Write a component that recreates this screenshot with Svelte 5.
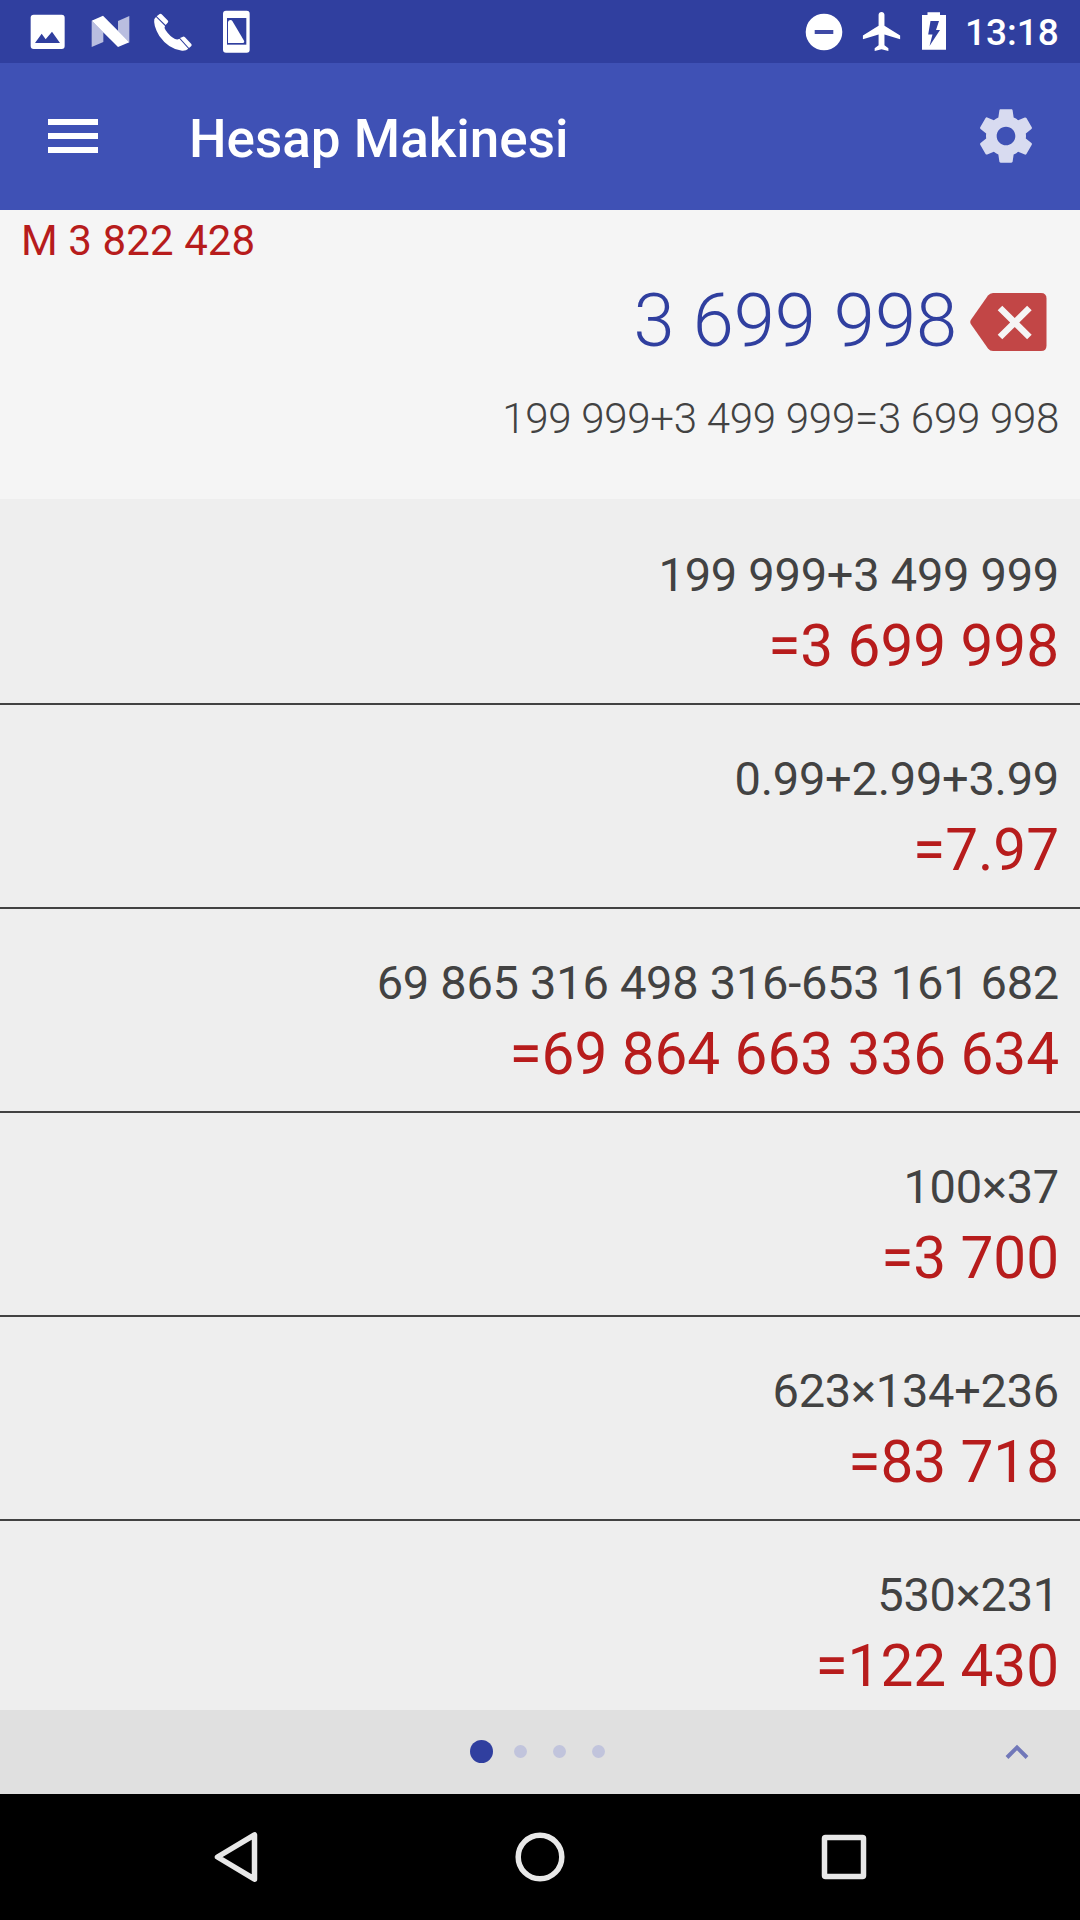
<script>
	let memory = $state('M 3 822 428');
	let current = $state('3 699 998');
	let expression = $state('199 999+3 499 999=3 699 998');
	let page = $state(0);

	const history = [
		{ expr: '199 999+3 499 999', result: '3 699 998' },
		{ expr: '0.99+2.99+3.99', result: '7.97' },
		{ expr: '69 865 316 498 316-653 161 682', result: '69 864 663 336 634' },
		{ expr: '100×37', result: '3 700' },
		{ expr: '623×134+236', result: '83 718' },
		{ expr: '530×231', result: '122 430' }
	];
</script>

<div class="screen">
	<div class="status">
		<div class="notifications">
			<!-- picture -->
			<svg viewBox="0 0 189 189">
				<rect x="44" y="44" width="102" height="103" rx="9" fill="#fff" />
				<path d="M57 129L77 101L89 118L108 95L132 129Z" fill="#303f9f" />
			</svg>
			<!-- android n -->
			<svg viewBox="0 0 189 189">
				<path d="M38 62L73 97V126L38 141Z" fill="#b9bee0" />
				<path d="M117 63L151 48V127L117 94Z" fill="#b9bee0" />
				<path d="M38 62L72 47L151 127L117 141Z" fill="#fff" />
			</svg>
			<!-- phone -->
			<svg viewBox="0 0 189 189" fill="#fff">
				<path d="M42 51L69 78Q65 84 71 91Q84 110 99 117Q107 120 112 116L139 146Q132 153 120 152Q80 148 52 108Q33 76 37 57Z" />
				<path d="M44 49L53 42Q56 40 59 43L78 62Q80 65 77 68L71 75Z" />
				<path d="M114 114L123 110Q126 109 129 112L148 132Q150 135 148 138L141 144Z" />
			</svg>
			<!-- device -->
			<svg viewBox="0 0 189 189">
				<rect x="54" y="32" width="80" height="126" rx="9" fill="#fff" />
				<rect x="66" y="54" width="58" height="80" fill="#303f9f" />
				<path d="M69 66Q70 60 77 60Q80 60 82 63L118 124Q118 129 114 129H69Z" fill="#fff" />
				<path d="M120 58V130" stroke="#303f9f" stroke-width="4" />
			</svg>
		</div>
		<div class="system">
			<svg class="dnd" viewBox="0 0 52 63">
				<circle cx="26" cy="32" r="18.3" fill="#fff" />
				<rect x="16.7" y="30" width="18.6" height="4" fill="#3f4aa6" />
			</svg>
			<svg class="plane" viewBox="0 0 24 24">
				<path
					d="M21 16v-2l-8-5V3.500c0-.83-.67-1.500-1.500-1.500S10 2.670 10 3.500V9l-8 5v2l8-2.500V19l-2 1.500V22l3.500-1 3.500 1v-1.500L13 19v-5.500l8 2.500z"
					fill="#fff"
				/>
			</svg>
			<svg class="battery" viewBox="0 0 40 63">
				<path d="M8 15H13.500V12.300H26V15H32V49.700H8Z" fill="#fff" />
				<path d="M16.500 21H25L22 30H26L15.500 46L18.500 34.500H14.200Z" fill="#303f9f" />
			</svg>
			<span class="time">13:18</span>
		</div>
	</div>

	<header>
		<button class="menu" aria-label="Menu">
			<i></i>
			<i></i>
			<i></i>
		</button>
		<h1>Hesap Makinesi</h1>
		<svg class="gear" viewBox="0 0 24 24">
			<path
				d="M19.430 12.980c.04-.32.07-.64.07-.98s-.03-.66-.07-.98l2.110-1.650c.19-.15.24-.42.12-.64l-2-3.460c-.12-.22-.39-.3-.61-.22l-2.490 1c-.52-.4-1.080-.73-1.690-.98l-.38-2.650C14.460 2.180 14.250 2 14 2h-4c-.25 0-.46.18-.49.42l-.38 2.650c-.61.25-1.170.59-1.690.98l-2.490-1c-.23-.09-.49 0-.61.22l-2 3.460c-.13.22-.07.49.12.64l2.110 1.650c-.04.32-.07.65-.07.98s.03.66.07.98l-2.110 1.650c-.19.15-.24.42-.12.64l2 3.460c.12.22.39.3.61.22l2.490-1c.52.4 1.080.73 1.690.98l.38 2.650c.03.24.24.42.49.42h4c.25 0 .46-.18.49-.42l.38-2.650c.61-.25 1.170-.59 1.690-.98l2.490 1c.23.09.49 0 .61-.22l2-3.460c.12-.22.07-.49-.12-.64l-2.110-1.650zM12 15.500c-1.930 0-3.500-1.570-3.500-3.500s1.570-3.500 3.500-3.500 3.500 1.570 3.500 3.500-1.570 3.500-3.500 3.500z"
			/>
		</svg>
	</header>

	<div class="display">
		<div class="memory">{memory}</div>
		<div class="current">
			<span>{current}</span>
			<svg viewBox="0 0 77 58">
				<path
					d="M23 0H71Q76.500 0 76.500 5.500V52.500Q76.500 58 71 58H23Q20 58 18 55.500L.8 31Q-.3 29 .8 27L18 2.500Q20 0 23 0Z"
					fill="#c24646"
				/>
				<path d="M30 15L59.400 44M59.400 15L30 44" stroke="#f5f5f5" stroke-width="6.500" />
			</svg>
		</div>
		<div class="expression">{expression}</div>
	</div>

	<div class="history">
		{#each history as item}
			<div class="item">
				<div class="expr">{item.expr}</div>
				<div class="result">={item.result}</div>
			</div>
		{/each}
	</div>

	<div class="pager">
		<div class="dots">
			{#each Array.from({ length: 4 }) as _, i}
				<button class="dot" class:active={i === page} aria-label="Page {i + 1}" onclick={() => (page = i)}></button>
			{/each}
		</div>
		<svg class="chevron" viewBox="0 0 24 16">
			<path d="M2 13.500L12 3.500L22 13.500" fill="none" stroke="#7178b9" stroke-width="4" />
		</svg>
	</div>

	<nav>
		<svg viewBox="0 0 60 60">
			<path d="M48.500 7.800V52.200L11.500 30Z" />
		</svg>
		<svg viewBox="0 0 60 60">
			<circle cx="30" cy="30" r="21.800" />
		</svg>
		<svg viewBox="0 0 60 60">
			<rect x="10.500" y="10.500" width="39" height="39" rx="1" />
		</svg>
	</nav>
</div>

<style>
	:global(body) {
		margin: 0;
	}

	.screen {
		display: flex;
		flex-direction: column;
		width: 1080px;
		height: 1920px;
		overflow: hidden;
		background: #eee;
		font-family: Roboto, sans-serif;
		white-space: nowrap;
	}

	svg {
		display: block;
		flex: none;
	}

	button {
		padding: 0;
		border: 0;
		background: none;
	}

	.status {
		display: flex;
		justify-content: space-between;
		flex: none;
		height: 63px;
		padding: 0 0 0 16px;
		background: #303f9f;
	}

	.notifications {
		display: flex;
	}

	.notifications svg {
		width: 63px;
		height: 63px;
	}

	.system {
		display: flex;
		align-items: center;
	}

	.dnd {
		width: 52px;
		height: 63px;
	}

	.plane {
		width: 47px;
		height: 47px;
		margin: 0 2px 0 9px;
	}

	.battery {
		width: 40px;
		height: 63px;
		margin-left: 6px;
	}

	.time {
		width: 115px;
		margin-left: 11px;
		padding-top: 2px;
		color: #fff;
		font-size: 37px;
		font-weight: 500;
	}

	header {
		display: flex;
		align-items: center;
		flex: none;
		height: 147px;
		padding: 0 42px 2px 48px;
		box-sizing: border-box;
		background: #3f51b5;
	}

	.menu {
		display: flex;
		flex-direction: column;
		gap: 8.500px;
		width: 50px;
		padding-top: 1px;
	}

	.menu i {
		height: 5.800px;
		background: #fff;
	}

	h1 {
		flex: 1;
		margin: 0 0 0 91px;
		padding-top: 6px;
		color: #fff;
		font-size: 53px;
		font-weight: 500;
	}

	.gear {
		width: 64px;
		height: 64px;
		fill: #d8dbf0;
	}

	.display {
		flex: none;
		height: 289px;
		padding: 0 21px;
		box-sizing: border-box;
		background: #f5f5f5;
	}

	.memory {
		color: #b71c1c;
		font-size: 42px;
		letter-spacing: 0.100px;
		line-height: 61px;
	}

	.current {
		display: flex;
		justify-content: flex-end;
		align-items: center;
		padding-right: 12px;
		color: #303f9f;
		font-size: 74px;
		font-weight: 300;
		line-height: 100px;
	}

	.current svg {
		width: 77px;
		height: 58px;
		margin: 2px 0 0 13px;
	}

	.expression {
		color: #424242;
		font-size: 42px;
		font-weight: 300;
		letter-spacing: -0.270px;
		line-height: 95px;
		text-align: right;
	}

	.history {
		flex: 1;
		min-height: 0;
		padding-top: 2px;
		overflow: hidden;
	}

	.item {
		height: 204px;
		padding: 40px 21px 0 0;
		border-bottom: 2px solid #424242;
		box-sizing: border-box;
		text-align: right;
	}

	.expr {
		color: #424242;
		font-size: 47px;
		letter-spacing: -0.270px;
		line-height: 68px;
	}

	.result {
		color: #b71c1c;
		font-size: 58.500px;
		letter-spacing: -0.050px;
		line-height: 74px;
	}

	.pager {
		display: grid;
		grid-template-columns: 1fr auto 1fr;
		align-items: center;
		flex: none;
		height: 84px;
		padding: 0 51px 1px 0;
		box-sizing: border-box;
		background: #e0e0e0;
	}

	.dots {
		display: flex;
		grid-column: 2;
		align-items: center;
		gap: 26px;
		margin-left: 45px;
	}

	.dot {
		width: 13px;
		height: 13px;
		border-radius: 50%;
		background: #c1c4dc;
	}

	.dot.active {
		width: 23px;
		height: 23px;
		margin-right: -5px;
		background: #303f9f;
	}

	.chevron {
		width: 24px;
		height: 16px;
		justify-self: end;
	}

	nav {
		display: flex;
		justify-content: center;
		align-items: center;
		gap: 244px;
		flex: none;
		height: 126px;
		background: #000;
	}

	nav svg {
		width: 60px;
		height: 60px;
		fill: none;
		stroke: #e8e8e8;
		stroke-width: 5.500;
		stroke-linejoin: round;
	}
</style>
